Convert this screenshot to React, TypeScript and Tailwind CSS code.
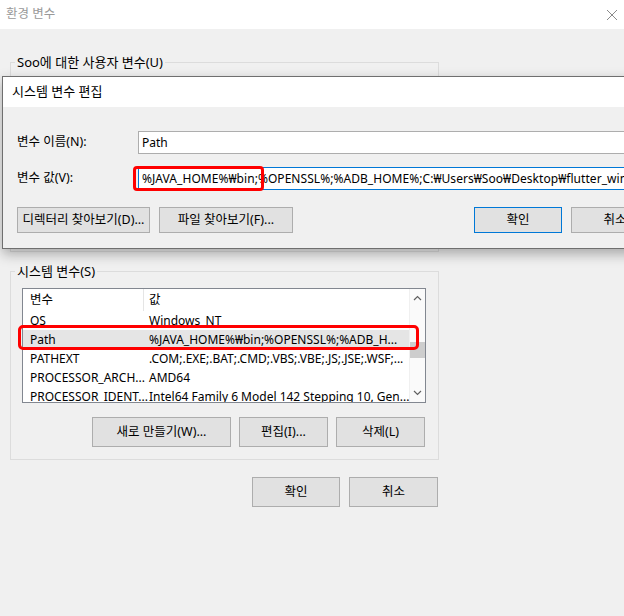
import React from 'react';

const font = { fontFamily: '"Noto Sans","Noto Sans CJK KR",sans-serif' };

function Btn({ label, className = '', primary = false }: { label: string; className?: string; primary?: boolean }) {
  return (
    <button
      type="button"
      className={`flex shrink-0 items-center justify-center whitespace-nowrap bg-[#e1e1e1] text-[12.5px] text-black border ${
        primary ? 'border-[#0078d7]' : 'border-[#adadad]'
      } ${className}`}
    >
      {label}
    </button>
  );
}

const rows = [
  { name: 'OS', value: 'Windows_NT' },
  { name: 'Path', value: '%JAVA_HOME%₩bin;%OPENSSL%;%ADB_H...', selected: true },
  { name: 'PATHEXT', value: '.COM;.EXE;.BAT;.CMD;.VBS;.VBE;.JS;.JSE;.WSF;...' },
  { name: 'PROCESSOR_ARCH...', value: 'AMD64' },
  { name: 'PROCESSOR_IDENT...', value: 'Intel64 Family 6 Model 142 Stepping 10, Gen...' },
];

function VarList() {
  return (
    <div className="relative ml-[11px] mt-[9px] w-[404px]">
      <div className="flex h-[115px] w-[404px] overflow-hidden border border-[#828790] bg-white">
        <div className="flex-1">
          <div className="flex h-[22px] items-center text-[12px]">
            <div className="w-[120px] pl-[7px] text-[12.5px]">변수</div>
            <div className="h-full w-px bg-[#e5e5e5]" />
            <div className="pl-[5px] text-[12.5px]">값</div>
          </div>
          {rows.map((r) => (
            <div
              key={r.name}
              className={`flex h-[19px] items-center whitespace-nowrap text-[12px] ${r.selected ? 'bg-[#e5e5e5]' : ''}`}
            >
              <div className="w-[121px] pl-[7px]">{r.name}</div>
              <div className="pl-[5px]">{r.value}</div>
            </div>
          ))}
        </div>
        <div className="flex w-[17px] flex-col items-center border-l border-[#f0f0f0] bg-[#fafafa] pb-[6px] pt-[6px]">
          <svg width="9" height="6" viewBox="0 0 9 6">
            <path d="M1 5 L4.5 1.5 L8 5" fill="none" stroke="#606060" strokeWidth="1.2" />
          </svg>
          <div className="mt-[41px] h-[16px] w-[15px] bg-[#cdcdcd]" />
          <div className="flex-1" />
          <svg width="9" height="6" viewBox="0 0 9 6">
            <path d="M1 1 L4.5 4.5 L8 1" fill="none" stroke="#606060" strokeWidth="1.2" />
          </svg>
        </div>
      </div>
      <div className="absolute left-[-4px] top-[37px] h-[25px] w-[401px] rounded-[5px] border-[3px] border-[#ff0000]" />
    </div>
  );
}

function EditDialog() {
  return (
    <div className="absolute left-[2px] top-[76px] h-[173px] w-[700px] border border-[#6f6f6f] bg-[#f0f0f0] shadow-[0_5px_12px_rgba(0,0,0,0.3)]">
      <div className="flex h-[30px] items-center bg-white pl-[9px] text-[13px] text-black">시스템 변수 편집</div>
      <div className="pt-[24px] text-[12px]">
        <div className="flex items-center">
          <div className="w-[135px] shrink-0 pl-[14px] text-[12.5px]">변수 이름(N):</div>
          <div className="flex h-[23px] min-w-0 flex-1 items-center border border-[#adadad] bg-white pl-[3px]">Path</div>
        </div>
        <div className="mt-[13px] flex items-center">
          <div className="w-[135px] shrink-0 pl-[14px] text-[12.5px]">변수 값(V):</div>
          <div className="relative flex h-[23px] min-w-0 flex-1 items-center whitespace-nowrap border border-[#0078d7] bg-white pl-[3px]">
            <span className="overflow-hidden tracking-[0.05px]">%JAVA_HOME%₩bin;%OPENSSL%;%ADB_HOME%;C:₩Users₩Soo₩Desktop₩flutter_windows</span>
            <div className="absolute left-[-6px] top-[-2px] h-[25px] w-[131px] rounded-[4px] border-[3px] border-[#ff0000]" />
          </div>
        </div>
        <div className="mt-[17px] flex">
          <Btn label="디렉터리 찾아보기(D)..." className="ml-[14px] h-[26px] w-[133px]" />
          <Btn label="파일 찾아보기(F)..." className="ml-[9px] h-[26px] w-[134px]" />
          <Btn label="확인" primary className="ml-[181px] h-[26px] w-[88px]" />
          <Btn label="취소" className="ml-[9px] h-[26px] w-[88px]" />
        </div>
      </div>
    </div>
  );
}

export default function App() {
  return (
    <div style={font} className="relative h-[616px] w-[624px] overflow-hidden bg-[#f0f0f0] text-black">
      <div className="flex h-[29px] items-center justify-between bg-white pl-[6px] pr-[2px]">
        <span className="text-[12.5px] text-[#999999]">환경 변수</span>
        <svg width="20" height="20" viewBox="0 0 20 20">
          <path d="M5 5 L15 15 M15 5 L5 15" stroke="#8a8a8a" strokeWidth="1" />
        </svg>
      </div>

      <div className="ml-[10px] w-[429px]">
        <fieldset className="mt-[25px] h-[198px] border border-[#dcdcdc] p-0">
          <legend className="ml-[4px] px-[2px] text-[13px] leading-[16px]">Soo에 대한 사용자 변수(U)</legend>
        </fieldset>

        <fieldset className="mt-[11px] h-[197px] border border-[#dcdcdc] p-0">
          <legend className="ml-[4px] px-[2px] text-[13px] leading-[16px]">시스템 변수(S)</legend>
          <VarList />
          <div className="mt-[14px] flex justify-end gap-[8px] pr-[13px]">
            <Btn label="새로 만들기(W)..." className="h-[30px] w-[139px]" />
            <Btn label="편집(I)..." className="h-[30px] w-[89px]" />
            <Btn label="삭제(L)" className="h-[30px] w-[89px]" />
          </div>
        </fieldset>

        <div className="mt-[17px] flex justify-end gap-[9px] pr-[1px]">
          <Btn label="확인" className="h-[30px] w-[88px]" />
          <Btn label="취소" className="h-[30px] w-[89px]" />
        </div>
      </div>

      <EditDialog />
    </div>
  );
}
